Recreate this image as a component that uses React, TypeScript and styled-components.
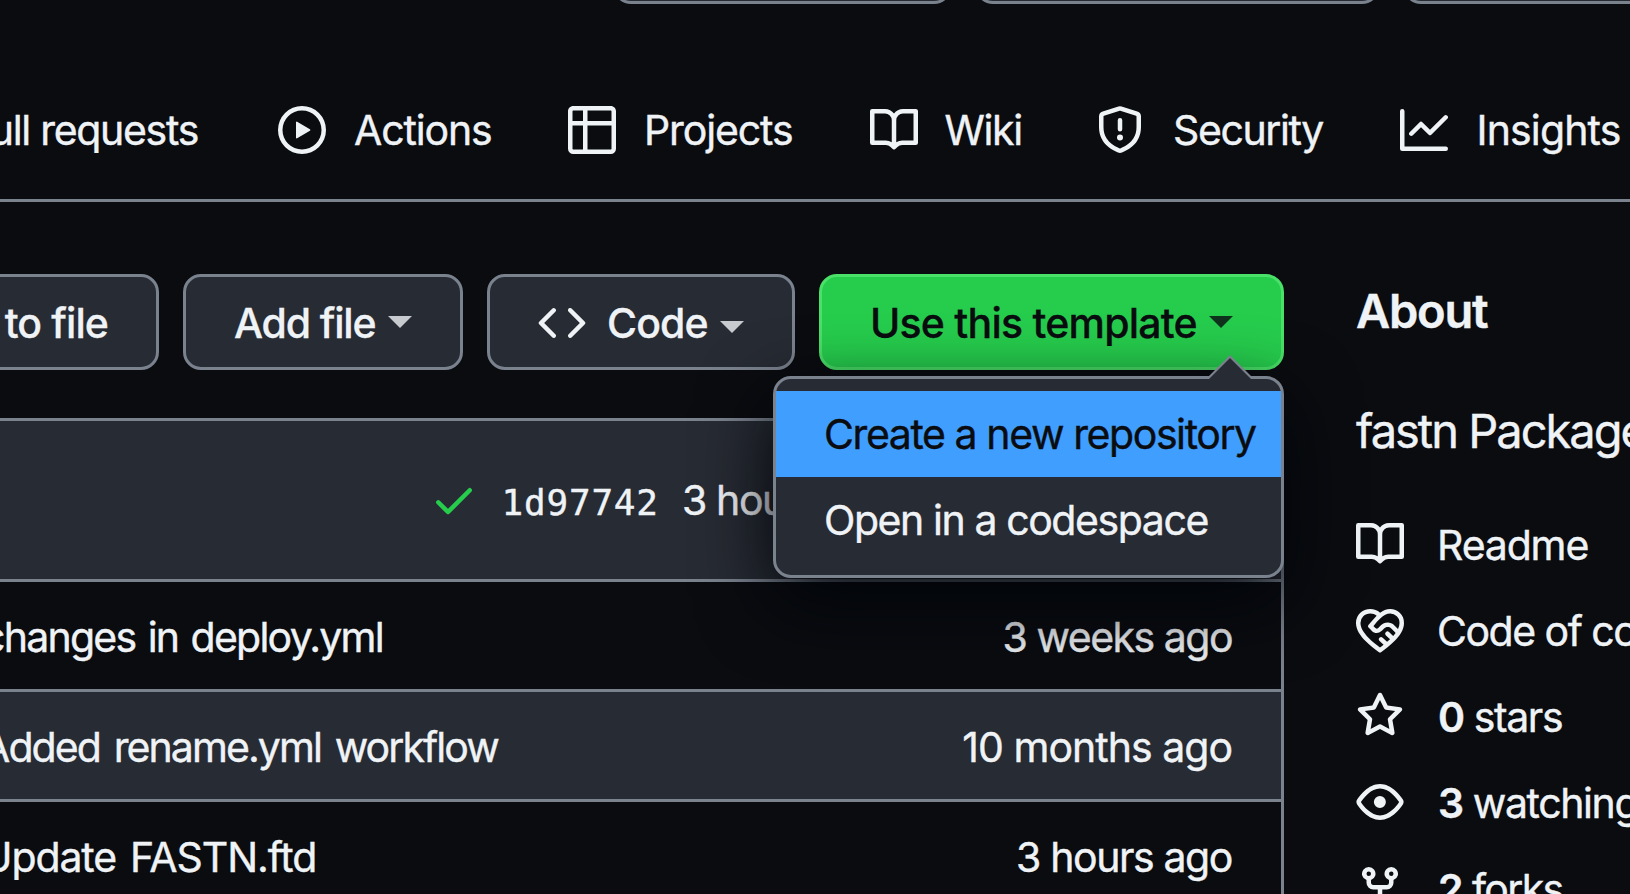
import React from 'react';
import styled, { createGlobalStyle } from 'styled-components';

const color = {
  bg: '#0a0c10',
  subtle: '#272b33',
  border: '#7a828e',
  text: '#f0f3f6',
  green: '#26cd4d',
  greenBorder: '#4ae168',
  blue: '#409eff',
};

const Global = createGlobalStyle`
  * { box-sizing: border-box; }
  html, body { margin: 0; padding: 0; background: ${color.bg}; overflow: hidden; }
`;

const Page = styled.div`
  display: flex;
  flex-direction: column;
  width: 1630px;
  height: 894px;
  overflow: hidden;
  background: ${color.bg};
  color: ${color.text};
  font-family: Inter, 'Liberation Sans', sans-serif;
  font-size: 41px;
  line-height: 60px;
  white-space: nowrap;
  -webkit-text-stroke: 0.4px currentColor;
`;

const Text = styled.span<{ $track?: number; $word?: number }>`
  letter-spacing: ${(p) => p.$track ?? -1.2}px;
  word-spacing: ${(p) => p.$word ?? 0}px;
`;

const RepoActions = styled.div`
  display: flex;
  flex: none;
  align-items: flex-end;
  gap: 23px;
  height: 4px;
  padding-left: 613px;
  overflow: hidden;
`;

const RepoAction = styled.div<{ $width: number }>`
  flex: none;
  width: ${(p) => p.$width}px;
  height: 84px;
  border: 3px solid ${color.border};
  border-radius: 18px;
  background: ${color.subtle};
`;

const Nav = styled.nav`
  display: grid;
  flex: none;
  grid-template-columns: 278px 290px 301.5px 226.5px 303.5px auto;
  align-content: start;
  height: 198px;
  padding-top: 102px;
  border-bottom: 3px solid ${color.border};
`;

const NavItem = styled.a<{ $end?: boolean; $gap?: number }>`
  display: flex;
  align-items: center;
  justify-content: ${(p) => (p.$end ? 'flex-end' : 'flex-start')};
  gap: ${(p) => p.$gap ?? 28}px;
  height: 48px;
  padding-right: ${(p) => (p.$end ? 80 : 0)}px;
`;

const Svg = styled.svg<{ $tint?: string }>`
  flex: none;
  width: 48px;
  height: 48px;
  fill: ${(p) => p.$tint ?? color.text};
`;

const Main = styled.main`
  display: flex;
  gap: 72px;
  padding-top: 72px;
`;

const Files = styled.section`
  flex: none;
  width: 1284px;
`;

const Toolbar = styled.div`
  display: flex;
  justify-content: flex-end;
  gap: 24px;
  margin-bottom: 48px;
`;

const Button = styled.button<{ $width: number; $primary?: boolean }>`
  display: flex;
  flex: none;
  align-items: center;
  width: ${(p) => p.$width}px;
  height: 96px;
  margin: 0;
  padding: 2px 48px 0;
  border: 3px solid ${(p) => (p.$primary ? color.greenBorder : color.border)};
  border-radius: 18px;
  background: ${(p) => (p.$primary ? color.green : color.subtle)};
  color: ${(p) => (p.$primary ? color.bg : color.text)};
  font: inherit;
  font-weight: 500;
  white-space: nowrap;
  -webkit-text-stroke: 0.3px currentColor;
`;

const Caret = styled.i<{ $low?: boolean }>`
  margin: ${(p) => (p.$low ? '8px' : '-2px')} 0 0 auto;
  border: 12px solid transparent;
  border-top-color: currentColor;
  border-bottom-width: 0;
  opacity: 0.8;
`;

const CodeLabel = styled(Text)`
  margin-left: 21px;
`;

const TemplateMenuAnchor = styled.div`
  position: relative;
  z-index: 10;
  flex: none;
`;

const Menu = styled.div`
  position: absolute;
  top: 102px;
  right: 0;
  width: 511px;
  padding: 12px 0;
  border: 3px solid ${color.border};
  border-radius: 18px;
  background: ${color.subtle};
  box-shadow: 0 24px 72px #010409;

  &::before,
  &::after {
    content: '';
    position: absolute;
    border: solid transparent;
  }
  &::before {
    top: -48px;
    right: 27px;
    border-width: 24px;
    border-bottom-color: ${color.border};
  }
  &::after {
    top: -42px;
    right: 30px;
    border-width: 21px;
    border-bottom-color: ${color.subtle};
  }
`;

const MenuItem = styled.div<{ $active?: boolean }>`
  position: relative;
  z-index: 1;
  display: flex;
  align-items: center;
  height: 86px;
  padding-left: 48px;
  background: ${(p) => (p.$active ? color.blue : 'transparent')};
  color: ${(p) => (p.$active ? color.bg : color.text)};
  -webkit-text-stroke: 0.4px ${(p) => (p.$active ? color.bg : color.text)};
`;

const Table = styled.div`
  border-top: 3px solid ${color.border};
  border-right: 3px solid ${color.border};
  border-top-right-radius: 18px;
  overflow: hidden;
`;

const CommitBar = styled.div`
  display: flex;
  align-items: center;
  height: 158px;
  padding-left: 430px;
  background: ${color.subtle};
`;

const Sha = styled.code`
  width: 180.5px;
  margin-left: 23.5px;
  padding-top: 5px;
  font-family: 'DejaVu Sans Mono', monospace;
  font-size: 36px;
  letter-spacing: 0.8px;
`;

const Row = styled.div<{ $hover?: boolean }>`
  display: flex;
  align-items: center;
  justify-content: space-between;
  height: 110px;
  padding: 2px 49px 0 0;
  border-top: 3px solid ${color.border};
  background: ${(p) => (p.$hover ? color.subtle : color.bg)};
`;

const Message = styled(Text)`
  margin-left: -18px;
`;

const Sidebar = styled.aside`
  flex: none;
`;

const Heading = styled.h2`
  margin: 0;
  font-size: 47px;
  font-weight: 600;
  line-height: 74px;
`;

const Description = styled.p`
  margin: 47px 0 53px;
  font-size: 47px;
  line-height: 72px;
`;

const Fact = styled.div`
  display: flex;
  align-items: center;
  gap: 33px;
  height: 48px;
  margin-bottom: 38px;
`;

const FactText = styled(Text)`
  margin-top: 2px;
`;

const Strong = styled.b`
  margin-left: 1px;
  font-weight: 600;
`;

const icons = {
  play: 'M8 0a8 8 0 1 1 0 16A8 8 0 0 1 8 0ZM1.5 8a6.5 6.5 0 1 0 13 0 6.5 6.5 0 0 0-13 0Zm4.879-2.773 4.264 2.559a.25.25 0 0 1 0 .428l-4.264 2.559A.25.25 0 0 1 6 10.559V5.442a.25.25 0 0 1 .379-.215Z',
  table: 'M0 1.75C0 .784.784 0 1.75 0h12.5C15.216 0 16 .784 16 1.75v12.5A1.75 1.75 0 0 1 14.25 16H1.75A1.75 1.75 0 0 1 0 14.25ZM6.5 6.5v8h7.75a.25.25 0 0 0 .25-.25V6.5Zm8-1.5V1.75a.25.25 0 0 0-.25-.25H6.5V5Zm-13 1.5v7.75c0 .138.112.25.25.25H5v-8ZM5 5V1.5H1.75a.25.25 0 0 0-.25.25V5Z',
  book: 'M0 1.75A.75.75 0 0 1 .75 1h4.253c1.227 0 2.317.59 3 1.501A3.743 3.743 0 0 1 11.006 1h4.245a.75.75 0 0 1 .75.75v10.5a.75.75 0 0 1-.75.75h-4.507a2.25 2.25 0 0 0-1.591.659l-.622.621a.75.75 0 0 1-1.06 0l-.622-.621A2.25 2.25 0 0 0 5.258 13H.75a.75.75 0 0 1-.75-.75Zm7.251 10.324.004-5.073-.002-2.253A2.25 2.25 0 0 0 5.003 2.5H1.5v9h3.757a3.75 3.75 0 0 1 1.994.574ZM8.755 4.75l-.004 7.322a3.752 3.752 0 0 1 1.992-.572H14.5v-9h-3.495a2.25 2.25 0 0 0-2.25 2.25Z',
  shield: 'M7.467.133a1.748 1.748 0 0 1 1.066 0l5.25 1.68A1.75 1.75 0 0 1 15 3.48V7c0 1.566-.32 3.182-1.303 4.682-.983 1.498-2.585 2.813-5.032 3.855a1.697 1.697 0 0 1-1.33 0c-2.447-1.042-4.049-2.357-5.032-3.855C1.32 10.182 1 8.566 1 7V3.48a1.75 1.75 0 0 1 1.217-1.667Zm.61 1.429a.25.25 0 0 0-.153 0l-5.25 1.68a.25.25 0 0 0-.174.238V7c0 1.358.275 2.666 1.057 3.86.784 1.194 2.121 2.34 4.366 3.297a.196.196 0 0 0 .154 0c2.245-.956 3.582-2.104 4.366-3.298C13.225 9.666 13.5 8.36 13.5 7V3.48a.251.251 0 0 0-.174-.237l-5.25-1.68ZM8.75 4.75v3a.75.75 0 0 1-1.5 0v-3a.75.75 0 0 1 1.5 0ZM9 10.5a1 1 0 1 1-2 0 1 1 0 0 1 2 0Z',
  graph: 'M1.5 1.75V13.5h13.75a.75.75 0 0 1 0 1.5H.75a.75.75 0 0 1-.75-.75V1.75a.75.75 0 0 1 1.5 0Zm14.28 2.53-5.25 5.25a.75.75 0 0 1-1.06 0L7 7.06 4.28 9.78a.751.751 0 0 1-1.042-.018.751.751 0 0 1-.018-1.042l3.25-3.25a.75.75 0 0 1 1.06 0L10 7.94l4.72-4.72a.751.751 0 0 1 1.042.018.751.751 0 0 1 .018 1.042Z',
  code: 'm11.28 3.22 4.25 4.25a.75.75 0 0 1 0 1.06l-4.25 4.25a.749.749 0 0 1-1.275-.326.749.749 0 0 1 .215-.734L13.94 8l-3.72-3.72a.749.749 0 0 1 .326-1.275.749.749 0 0 1 .734.215Zm-6.56 0a.751.751 0 0 1 1.042.018.751.751 0 0 1 .018 1.042L2.06 8l3.72 3.72a.749.749 0 0 1-.326 1.275.749.749 0 0 1-.734-.215L.47 8.53a.75.75 0 0 1 0-1.06Z',
  check: 'M13.78 4.22a.75.75 0 0 1 0 1.06l-7.25 7.25a.75.75 0 0 1-1.06 0L2.22 9.28a.751.751 0 0 1 .018-1.042.751.751 0 0 1 1.042-.018L6 10.94l6.72-6.72a.75.75 0 0 1 1.06 0Z',
  conduct: 'M8.048 2.241c.964-.709 2.079-1.238 3.325-1.241a4.616 4.616 0 0 1 3.282 1.355c.41.408.757.86.996 1.428.238.568.348 1.206.347 1.968 0 2.193-1.505 4.254-3.081 5.862-1.496 1.526-3.213 2.796-4.249 3.563l-.22.163a.749.749 0 0 1-.895 0l-.221-.163c-1.036-.767-2.753-2.037-4.249-3.563C1.51 10.008.007 7.952.002 5.762a4.614 4.614 0 0 1 1.353-3.407C3.123.585 6.223.537 8.048 2.24Zm-1.153.983c-1.25-1.033-3.321-.967-4.48.191a3.115 3.115 0 0 0-.913 2.335c0 1.556 1.109 3.24 2.652 4.813C5.463 11.898 6.96 13.032 8 13.805c.353-.262.758-.565 1.191-.905l-1.326-1.223a.75.75 0 0 1 1.018-1.102l1.48 1.366c.328-.281.659-.577.984-.887L9.99 9.802a.75.75 0 1 1 1.019-1.103l1.384 1.28c.295-.329.566-.661.81-.995L12.92 8.7l-1.167-1.168c-.674-.671-1.78-.664-2.474.03-.268.269-.538.537-.802.797-.893.882-2.319.843-3.185-.032-.346-.35-.693-.697-1.043-1.047a.75.75 0 0 1-.04-1.016c.162-.191.336-.401.52-.623.62-.748 1.356-1.637 2.166-2.417Zm7.112 4.442c.313-.65.491-1.293.491-1.916v-.001c0-.614-.088-1.045-.23-1.385-.143-.339-.357-.633-.673-.949a3.111 3.111 0 0 0-2.218-.915c-1.092.003-2.165.627-3.226 1.602-.823.755-1.554 1.637-2.228 2.45l-.127.154.562.566a.755.755 0 0 0 1.066.02l.794-.79c1.258-1.258 3.312-1.31 4.594-.032.396.394.792.791 1.173 1.173Z',
  star: 'M8 .25a.75.75 0 0 1 .673.418l1.882 3.815 4.21.612a.75.75 0 0 1 .416 1.279l-3.046 2.97.719 4.192a.751.751 0 0 1-1.088.791L8 12.347l-3.766 1.98a.75.75 0 0 1-1.088-.79l.72-4.194L.818 6.374a.75.75 0 0 1 .416-1.28l4.21-.611L7.327.668A.75.75 0 0 1 8 .25Zm0 2.445L6.615 5.5a.75.75 0 0 1-.564.41l-3.097.45 2.24 2.184a.75.75 0 0 1 .216.664l-.528 3.084 2.769-1.456a.75.75 0 0 1 .698 0l2.77 1.456-.53-3.084a.75.75 0 0 1 .216-.664l2.24-2.183-3.096-.45a.75.75 0 0 1-.564-.41L8 2.694Z',
  eye: 'M8 2c1.981 0 3.671.992 4.933 2.078 1.27 1.091 2.187 2.345 2.637 3.023a1.62 1.62 0 0 1 0 1.798c-.45.678-1.367 1.932-2.637 3.023C11.67 13.008 9.981 14 8 14c-1.981 0-3.671-.992-4.933-2.078C1.797 10.83.88 9.576.43 8.898a1.62 1.62 0 0 1 0-1.798c.45-.677 1.367-1.931 2.637-3.022C4.33 2.992 6.019 2 8 2ZM1.679 7.932a.12.12 0 0 0 0 .136c.411.622 1.241 1.75 2.366 2.717C5.176 11.758 6.527 12.5 8 12.5c1.473 0 2.825-.742 3.955-1.715 1.124-.967 1.954-2.096 2.366-2.717a.12.12 0 0 0 0-.136c-.412-.621-1.242-1.75-2.366-2.717C10.824 4.242 9.473 3.5 8 3.5c-1.473 0-2.825.742-3.955 1.715-1.124.967-1.954 2.096-2.366 2.717ZM8 10a2 2 0 1 1-.001-3.999A2 2 0 0 1 8 10Z',
  fork: 'M5 5.372v.878c0 .414.336.75.75.75h4.5a.75.75 0 0 0 .75-.75v-.878a2.25 2.25 0 1 1 1.5 0v.878a2.25 2.25 0 0 1-2.25 2.25h-1.5v2.128a2.251 2.251 0 1 1-1.5 0V8.5h-1.5A2.25 2.25 0 0 1 3.5 6.25v-.878a2.25 2.25 0 1 1 1.5 0ZM5 3.25a.75.75 0 1 0-1.5 0 .75.75 0 0 0 1.5 0Zm6.75.75a.75.75 0 1 0 0-1.5.75.75 0 0 0 0 1.5Zm-3 8.75a.75.75 0 1 0-1.5 0 .75.75 0 0 0 1.5 0Z',
};

type IconName = keyof typeof icons;

const Icon = ({ name, tint }: { name: IconName; tint?: string }) => (
  <Svg viewBox="0 0 16 16" $tint={tint} aria-hidden="true">
    <path d={icons[name]} />
  </Svg>
);

const navItems: { icon: IconName; label: string; track: number; gap: number }[] = [
  { icon: 'play', label: 'Actions', track: -1.15, gap: 28 },
  { icon: 'table', label: 'Projects', track: -1.12, gap: 28 },
  { icon: 'book', label: 'Wiki', track: -1.4, gap: 27 },
  { icon: 'shield', label: 'Security', track: -1.4, gap: 29 },
  { icon: 'graph', label: 'Insights', track: -0.85, gap: 29 },
];

const rows = [
  { message: 'changes in deploy.yml', track: -1.75, word: 2.5, age: '3 weeks ago', ageTrack: -1.5 },
  { message: 'Added rename.yml workflow', track: -1.9, word: 4, age: '10 months ago', ageTrack: -0.98, hover: true },
  { message: 'Update FASTN.ftd', track: -1.1, word: 3.5, age: '3 hours ago', ageTrack: -1.4 },
];

const facts: { icon: IconName; count?: string; label: string; track: number }[] = [
  { icon: 'book', label: 'Readme', track: -1.15 },
  { icon: 'conduct', label: 'Code of conduct', track: -1.5 },
  { icon: 'star', count: '0', label: ' stars', track: -1.4 },
  { icon: 'eye', count: '3', label: ' watching', track: -1.4 },
  { icon: 'fork', count: '2', label: ' forks', track: -1.6 },
];

export default function App() {
  return (
    <Page>
      <Global />
      <RepoActions>
        <RepoAction $width={339} />
        <RepoAction $width={405} />
        <RepoAction $width={330} />
      </RepoActions>
      <Nav>
        <NavItem $end>
          <Text $track={-1.3}>Pull requests</Text>
        </NavItem>
        {navItems.map((item) => (
          <NavItem key={item.label} $gap={item.gap}>
            <Icon name={item.icon} />
            <Text $track={item.track}>{item.label}</Text>
          </NavItem>
        ))}
      </Nav>
      <Main>
        <Files>
          <Toolbar>
            <Button $width={269}>
              <Text $track={-0.9}>Go to file</Text>
            </Button>
            <Button $width={280}>
              <Text $track={-1.17}>Add file</Text>
              <Caret />
            </Button>
            <Button $width={308}>
              <Icon name="code" />
              <CodeLabel $track={-0.89}>Code</CodeLabel>
              <Caret $low />
            </Button>
            <TemplateMenuAnchor>
              <Button $width={465} $primary>
                <Text $track={-0.78}>Use this template</Text>
                <Caret />
              </Button>
              <Menu>
                <MenuItem $active>
                  <Text $track={-1.41}>Create a new repository</Text>
                </MenuItem>
                <MenuItem>
                  <Text $track={-1.42}>Open in a codespace</Text>
                </MenuItem>
              </Menu>
            </TemplateMenuAnchor>
          </Toolbar>
          <Table>
            <CommitBar>
              <Icon name="check" tint={color.green} />
              <Sha>1d97742</Sha>
              <Text $track={-1.4}>3 hours ago</Text>
            </CommitBar>
            {rows.map((row) => (
              <Row key={row.message} $hover={row.hover}>
                <Message $track={row.track} $word={row.word}>{row.message}</Message>
                <Text $track={row.ageTrack}>{row.age}</Text>
              </Row>
            ))}
          </Table>
        </Files>
        <Sidebar>
          <Heading>
            <Text $track={-1.23}>About</Text>
          </Heading>
          <Description>
            <Text $track={-2}>fastn Package</Text>
          </Description>
          {facts.map((fact) => (
            <Fact key={fact.label}>
              <Icon name={fact.icon} />
              <FactText $track={fact.track}>
                {fact.count && <Strong>{fact.count}</Strong>}
                {fact.label}
              </FactText>
            </Fact>
          ))}
        </Sidebar>
      </Main>
    </Page>
  );
}
